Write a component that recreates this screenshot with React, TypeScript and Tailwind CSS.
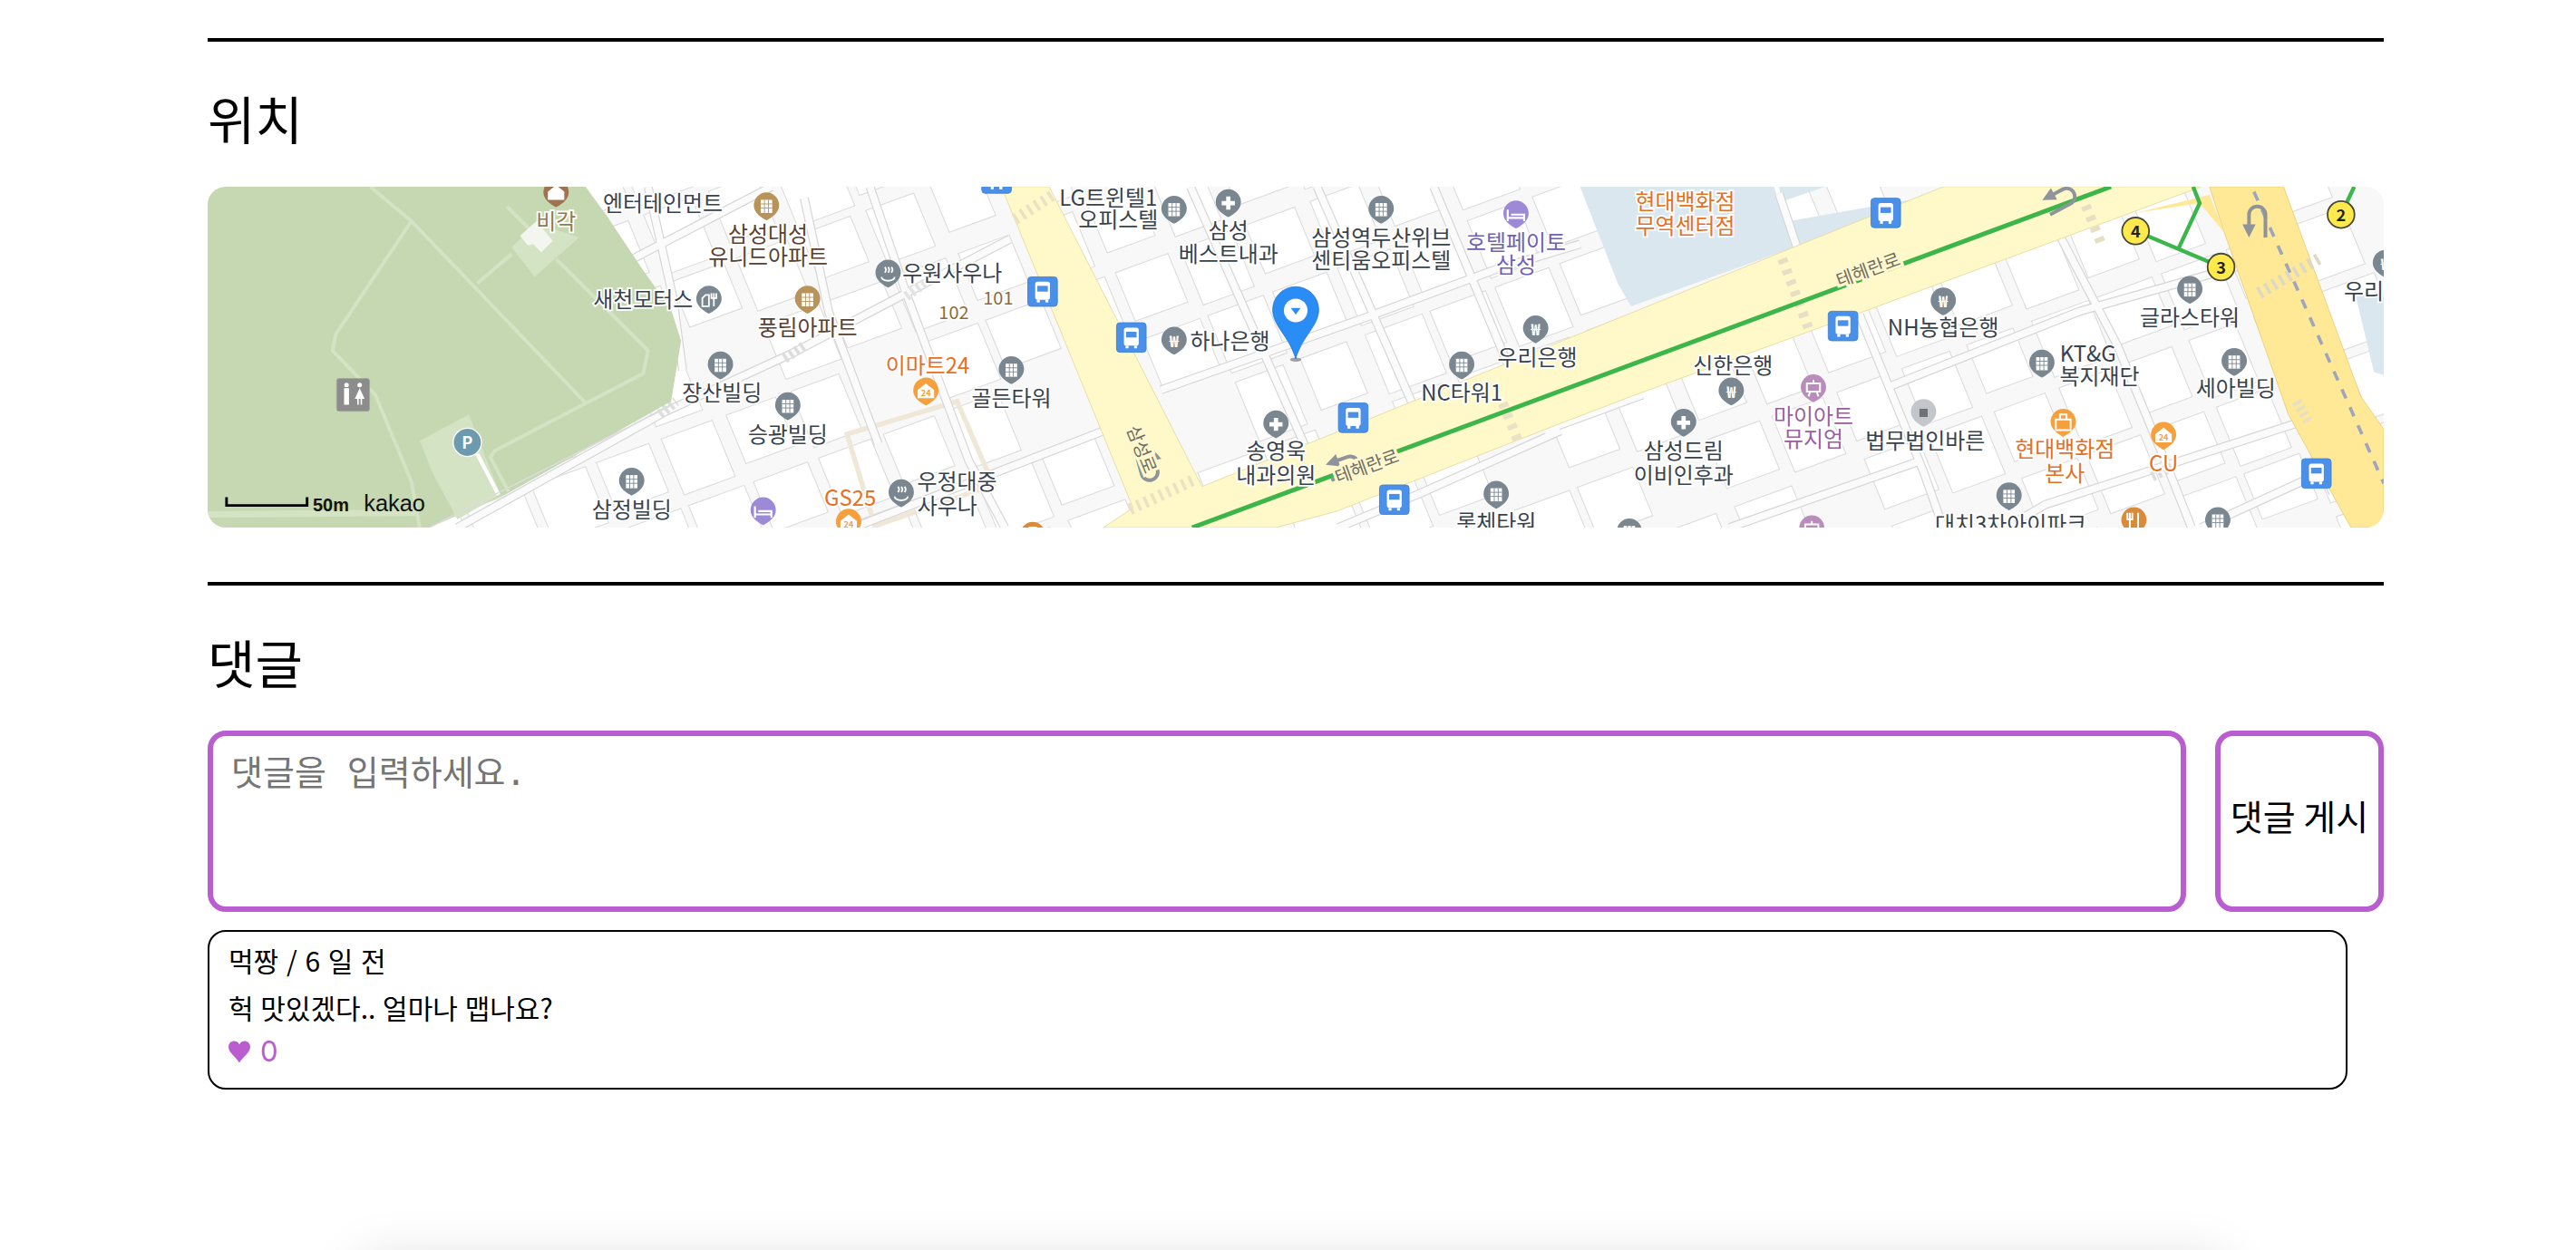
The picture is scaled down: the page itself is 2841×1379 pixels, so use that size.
const KR = '"Noto Sans CJK KR"';

// map is drawn in the coordinates of the 1568px wide overview
const labels: [string, number, number, string?][] = [
  ["엔터테인먼트", 404, 122],
  ["삼성대성", 468, 141, "#5a4030"],
  ["유니드아파트", 468, 155, "#5a4030"],
  ["비각", 339, 133, "#8f7a4a"],
  ["우원사우나", 580, 165],
  ["새천모터스", 392, 181],
  ["풍림아파트", 492, 198, "#5a4030"],
  ["이마트24", 565, 221, "#e5701f"],
  ["장산빌딩", 440, 238],
  ["승광빌딩", 480, 263],
  ["골든타워", 616, 241],
  ["GS25", 518, 302, "#e5701f"],
  ["우정대중", 583, 292],
  ["사우나", 577, 307],
  ["삼정빌딩", 385, 309],
  ["LG트윈텔1", 675, 119],
  ["오피스텔", 681, 132],
  ["삼성", 748, 139],
  ["베스트내과", 748, 153],
  ["삼성역두산위브", 841, 143],
  ["센티움오피스텔", 841, 157],
  ["호텔페이토", 923, 146, "#6e61b5"],
  ["삼성", 923, 160, "#6e61b5"],
  ["하나은행", 749, 206],
  ["우리은행", 936, 216],
  ["NC타워1", 890, 238],
  ["송영욱", 777, 273],
  ["내과의원", 777, 288],
  ["롯체타워", 911, 317],
  ["현대백화점", 1026, 121, "#e5701f"],
  ["무역센터점", 1026, 136, "#e5701f"],
  ["NH농협은행", 1183, 198],
  ["글라스타워", 1333, 192],
  ["우리은행", 1451, 176],
  ["KT&G", 1271, 214],
  ["복지재단", 1278, 228],
  ["세아빌딩", 1361, 235],
  ["신한은행", 1055, 221],
  ["마이아트", 1104, 252, "#9a5fa0"],
  ["뮤지엄", 1104, 266, "#9a5fa0"],
  ["법무법인바른", 1172, 267],
  ["삼성드림", 1025, 273],
  ["이비인후과", 1025, 288],
  ["현대백화점", 1257, 272, "#e5701f"],
  ["본사", 1257, 287, "#e5701f"],
  ["CU", 1317, 281, "#e5701f"],
  ["대치3차아이파크", 1224, 318],
];

const smallLabels: [string, number, number][] = [
  ["101", 608, 180],
  ["102", 581, 189],
];

const GRAY = "#7a8790";
const markers: [string, number, number, string][] = [
  ["home", 339, 117, "#a0724f"],
  ["building", 467, 125, "#b8935a"],
  ["sauna", 541, 166, GRAY],
  ["repair", 432, 182, GRAY],
  ["building", 492, 182, "#b8935a"],
  ["building", 439, 222, GRAY],
  ["building", 480, 247, GRAY],
  ["building", 385, 293, GRAY],
  ["bed", 465, 311, "#9d8ad6"],
  ["sauna", 549, 300, GRAY],
  ["24", 517, 318, "#f5a03c"],
  ["24", 564, 238, "#f5a03c"],
  ["building", 616, 225, GRAY],
  ["building", 715, 127, GRAY],
  ["cross", 748, 123, GRAY],
  ["building", 841, 127, GRAY],
  ["bed", 923, 130, "#9d8ad6"],
  ["won", 715, 207, GRAY],
  ["won", 935, 200, GRAY],
  ["building", 890, 222, GRAY],
  ["cross", 777, 258, GRAY],
  ["building", 911, 301, GRAY],
  ["bag", 629, 326, "#d98a3a"],
  ["building", 992, 324, GRAY],
  ["won", 1183, 183, GRAY],
  ["building", 1333, 176, GRAY],
  ["building", 1243, 221, GRAY],
  ["building", 1360, 220, GRAY],
  ["won", 1054, 238, GRAY],
  ["paint", 1104, 236, "#b98cbc"],
  ["dot", 1171, 251, "#c3c6ca"],
  ["cross", 1025, 257, GRAY],
  ["bag", 1256, 257, "#f5a03c"],
  ["24", 1317, 265, "#f5a03c"],
  ["building", 1223, 302, GRAY],
  ["fork", 1299, 317, "#d98a3a"],
  ["building", 1350, 317, GRAY],
  ["paint", 1103, 322, "#b98cbc"],
  ["won", 1452, 160, GRAY],
];

const busStops = [
  [607, 108],
  [635, 177],
  [689, 205],
  [824, 254],
  [849, 304],
  [1148, 129],
  [1122, 198],
  [1410, 288],
];

// side streets, drawn as a grey line with a pale one on top
const streets = [
  "279,321 406,250 482,215 552,178 615,145",
  "520,321 600,290 672,262",
  "470,113 380,160",
  "707,237 831,193 912,163 962,148",
  "1000,240 940,262",
  "815,321 865,300 950,262",
  "1150,235 1266,189 1375,158",
  "1053,321 1167,281",
  "1180,345 1245,307 1399,257",
  "1340,321 1451,270",
  "395,113 410,180 416,225",
  "530,113 552,178 590,280 612,321",
  "490,120 505,190 535,270",
  "725,113 795,272",
  "802,113 862,250",
  "873,113 905,190 935,262",
  "1083,117 1094,150",
  "1132,191 1171,287 1183,321",
  "1254,143 1289,210 1319,283 1334,321",
  "1390,230 1420,300",
];

const crosswalks: [string, string, number, string][] = [
  ["M618 133L643 117", "#e9e2c4", 7, "2 3"],
  ["M688 310L727 292", "#e9e2c4", 7, "2 3"],
  ["M915 245L925 270", "#e9e2c4", 6, "3 4"],
  ["M1085 157L1102 202", "#e6dfc4", 6, "3 4"],
  ["M1267 118L1280 150", "#e6dfc4", 6, "3 4"],
  ["M1375 178L1413 156", "#dcd8c4", 7, "2 3"],
  ["M1398 244L1405 256", "#e6dfc4", 6, "2 2"],
  ["M402 252L412 244", "#dddddd", 6, "2 2"],
  ["M478 218L490 210", "#dddddd", 6, "2 2"],
  ["M552 180L566 170", "#e3e3e3", 6, "2 2"],
  ["M1310 290L1322 284", "#dddddd", 6, "2 2"],
];

// white building footprints on one slanted lattice, the streets cut through them
const ux = 0.94;
const uy = -0.345;
const vx = 0.38;
const vy = 0.925;
const lattice: string[] = [];
for (let i = -4; i < 40; i++) {
  for (let j = -16; j < 14; j++) {
    if ((i * 3 + j * 5) % 11 === 0) continue;
    const x = 330 + i * 42 * ux + j * 44 * vx;
    const y = 200 + i * 42 * uy + j * 44 * vy;
    const a = 30 + ((i * 7 + j * 3 + 70) % 8);
    const b = 30 + ((i * 5 + j * 11 + 70) % 10);
    lattice.push(
      `${x},${y} ${x + a * ux},${y + a * uy} ${x + a * ux + b * vx},${y + a * uy + b * vy} ${x + b * vx},${y + b * vy}`,
    );
  }
}

const Glyph = ({ kind, x, y, color }: { kind: string; x: number; y: number; color: string }) => {
  switch (kind) {
    case "building":
      return (
        <g>
          <rect x={x - 3.5} y={y - 4} width={7} height={8} fill="#fff" />
          <path d={`M${x - 3.5} ${y - 1.5}H${x + 3.5}M${x - 3.5} ${y + 1}H${x + 3.5}M${x - 1.2} ${y - 4}V${y + 4}M${x + 1.2} ${y - 4}V${y + 4}`} stroke={color} strokeWidth={0.5} />
        </g>
      );
    case "cross":
      return <path d={`M${x - 4} ${y}H${x + 4}M${x} ${y - 4}V${y + 4}`} stroke="#fff" strokeWidth={2.6} />;
    case "won":
      return (
        <text x={x} y={y - 0.5} fontSize={9.5} fontWeight={700} fill="#fff" textAnchor="middle" dominantBaseline="central">
          ₩
        </text>
      );
    case "bed":
      return <path d={`M${x - 5} ${y - 3}V${y + 4}M${x - 5} ${y + 2}H${x + 5}V${y + 4}M${x - 3} ${y}H${x + 5}V${y + 2}`} stroke="#fff" strokeWidth={1.2} fill="none" />;
    case "sauna":
      return <path d={`M${x - 4} ${y + 2}a4 2.4 0 0 0 8 0M${x - 2} ${y - 4}q1.4 1.6 0 3.4M${x} ${y - 4}q1.4 1.6 0 3.4M${x + 2} ${y - 4}q1.4 1.6 0 3.4`} stroke="#fff" strokeWidth={1} fill="none" />;
    case "repair":
      return <path d={`M${x - 4} ${y + 4}V${y - 1}L${x - 2} ${y - 3}H${x}V${y + 4}ZM${x + 3} ${y - 4}V${y + 4}M${x + 1.5} ${y - 4}V${y - 1}H${x + 4.5}V${y - 4}`} stroke="#fff" strokeWidth={1} fill="none" />;
    case "24":
      return (
        <g>
          <path d={`M${x} ${y - 5}L${x + 5} ${y - 1}V${y + 4}H${x - 5}V${y - 1}Z`} fill="#fff" />
          <text x={x} y={y + 1} fontSize={5} fontWeight={700} fill={color} textAnchor="middle" dominantBaseline="central">
            24
          </text>
        </g>
      );
    case "paint":
      return <path d={`M${x - 4} ${y - 3}H${x + 4}V${y + 2}H${x - 4}ZM${x - 2} ${y + 2}L${x - 3} ${y + 5}M${x + 2} ${y + 2}L${x + 3} ${y + 5}M${x} ${y - 5}V${y - 3}`} stroke="#fff" strokeWidth={1.1} fill="none" />;
    case "dot":
      return <rect x={x - 2.5} y={y - 2.5} width={5} height={5} fill="#6f7378" />;
    case "bag":
      return <path d={`M${x - 4.5} ${y - 2}H${x + 4.5}V${y + 4.5}H${x - 4.5}ZM${x - 2} ${y - 2}V${y - 5}H${x + 2}V${y - 2}`} stroke="#fff" strokeWidth={1.1} fill="none" />;
    case "fork":
      return <path d={`M${x - 2.5} ${y - 5}V${y + 5}M${x + 2.5} ${y - 5}V${y + 5}M${x - 4} ${y - 5}V${y - 1}H${x - 1}V${y - 5}`} stroke="#fff" strokeWidth={1.1} fill="none" />;
    default:
      return <path d={`M${x} ${y - 5}L${x + 5} ${y - 1}V${y + 4}H${x - 5}V${y - 1}Z`} fill="#fff" />;
  }
};

const Marker = ({ kind, x, y, color }: { kind: string; x: number; y: number; color: string }) => (
  <g>
    <path
      d={`M${x} ${y + 8.5}C${x - 3} ${y + 7} ${x - 7.7} ${y + 4} ${x - 7.7} ${y - 0.5}A7.7 8 0 0 1 ${x + 7.7} ${y - 0.5}C${x + 7.7} ${y + 4} ${x + 3} ${y + 7} ${x} ${y + 8.5}Z`}
      fill={color}
    />
    <Glyph kind={kind} x={x} y={y} color={color} />
  </g>
);

const BusStop = ({ x, y }: { x: number; y: number }) => (
  <g>
    <rect x={x - 9} y={y - 9} width={18} height={18} rx={2} fill="#4a90e8" stroke="#3f82d6" strokeWidth={0.5} />
    <rect x={x - 4.5} y={y - 6} width={9} height={11} rx={1.5} fill="#fff" />
    <rect x={x - 3.2} y={y - 3.5} width={6.4} height={3.5} fill="#4a90e8" />
    <rect x={x - 3.5} y={y + 5} width={1.8} height={1.6} fill="#fff" />
    <rect x={x + 1.7} y={y + 5} width={1.8} height={1.6} fill="#fff" />
  </g>
);

const StationDot = ({ x, y, n }: { x: number; y: number; n: number }) => (
  <g>
    <circle cx={x} cy={y} r={8.2} fill="#ffe94d" stroke="#4a4a3a" strokeWidth={1} />
    <text x={x} y={y - 0.3} fontSize={10} fontWeight={700} fill="#222" textAnchor="middle" dominantBaseline="central">
      {n}
    </text>
  </g>
);

const RoadName = ({ x, y, rotate, text }: { x: number; y: number; rotate: number; text: string }) => (
  <text
    x={x}
    y={y}
    fontSize={11}
    fill="#6f6f62"
    stroke="#fff8cf"
    strokeWidth={3.5}
    paintOrder="stroke"
    textAnchor="middle"
    dominantBaseline="central"
    transform={`rotate(${rotate} ${x} ${y})`}
  >
    {text}
  </text>
);

const UTurn = ({ x, y, rotate }: { x: number; y: number; rotate: number }) => (
  <g transform={`rotate(${rotate} ${x} ${y})`} fill="none" stroke="#8f949b" strokeWidth={2.2}>
    <path d={`M${x + 6} ${y + 10}V${y - 4}a5 5 0 0 0 -10 0V${y + 4}`} />
    <path d={`M${x - 8} ${y + 2}L${x - 4} ${y + 10}L${x} ${y + 2}Z`} fill="#8f949b" stroke="none" />
  </g>
);

const KakaoMap = () => (
  <div className="h-[376px] w-full overflow-hidden rounded-[20px]">
    <svg viewBox="127 113 1324 208" preserveAspectRatio="none" className="block h-full w-full" fontFamily={KR}>
      <rect x={127} y={113} width={1324} height={208} fill="#f8f8f8" />
      <g fill="#ffffff" stroke="#dcdcdc" strokeWidth={0.6}>
        {lattice.map((points, i) => (
          <polygon key={i} points={points} />
        ))}
      </g>
      <polygon points="516,264 583,244 605,295 533,320" fill="none" stroke="#efe8d8" strokeWidth={3} />

      <polygon points="962,113 1080,113 1092,150 993,186 985,172" fill="#dbe7ef" />
      <polygon points="1089,134 1180,118 1153,131 1097,149" fill="#dbe7ef" />
      <polygon points="1083,113 1111,113 1085,122" fill="#dbe7ef" />
      <polygon points="1434,180 1451,176 1451,228 1445,226" fill="#dbe7ef" />

      <g fill="none" strokeLinejoin="round">
        {streets.map((points) => (
          <polyline key={points} points={points} stroke="#d6d6d6" strokeWidth={5.5} />
        ))}
        {streets.map((points) => (
          <polyline key={points} points={points} stroke="#fbfbfb" strokeWidth={4.2} />
        ))}
      </g>

      <polygon points="610,113 639,113 732,296 1183,113 1340,113 1313,123 1135,189 993,241 946,259 814,311 777,321 672,321 690,309" fill="#fff8c9" stroke="#e6dba0" strokeWidth={0.5} />
      <polygon points="1345,113 1390,113 1437,241 1451,261 1451,321 1431,321 1393,252 1354,141" fill="#ffe896" stroke="#e9cf7a" strokeWidth={0.5} />
      <path d="M1300 129L1339 123L1354 141L1345 118Z" fill="#ffe896" />
      <path d="M1372 116L1451 294" stroke="#9ea6bd" strokeWidth={2} strokeDasharray="6 6" />
      {crosswalks.map(([d, color, width, dash]) => (
        <path key={d} d={d} stroke={color} strokeWidth={width} strokeDasharray={dash} fill="none" />
      ))}

      <path d="M726 321L1285 113" stroke="#3cb54a" strokeWidth={2.8} />
      <path d="M1300 140L1352 162M1326 151L1339 123L1335 113M1425 130L1433 113" stroke="#3cb54a" strokeWidth={2.4} fill="none" />

      <polygon points="127,113 357,113 370,131 392,164 409,188 415,207 409,244 308,301 262,321 127,321" fill="#c5d8b1" />
      <g fill="none" stroke="#d3e3c4" strokeWidth={2.2} strokeLinejoin="round">
        <path d="M226 113L251 134L357 245" />
        <path d="M251 134L205 203L203 213L229 240L251 293L256 321" />
        <path d="M291 172L312 154" />
        <path d="M339 157L395 213L392 227L302 274L299 278L310 299" />
        <path d="M309 125L326 142" />
        <path d="M127 313L254 312" strokeWidth={4} />
      </g>
      <polygon points="312,150 327,135 353,144 326,168" fill="#d3e3c4" />
      <polygon points="317,143 327,134 337,146 330,153 325,148 322,149" fill="#f3f6ef" />
      <polygon points="256,268 286,252 305,301 279,316 264,288" fill="#d3e3c4" />
      <path d="M291 276L304 301" stroke="#fff" strokeWidth={2.4} />
      <path d="M262 321L408 247" stroke="#dcdcdc" strokeWidth={0.8} />

      <rect x={205.5} y={230} width={20} height={20} rx={1.5} fill="#8c8c8c" stroke="#a5a5a5" strokeWidth={0.5} />
      <circle cx={211.5} cy={234} r={1.4} fill="#fff" />
      <circle cx={219.5} cy={234} r={1.4} fill="#fff" />
      <path d="M210 236H213V246H210ZM219.5 236L222.5 242.5H216.5Z" fill="#fff" />
      <path d="M218.5 242V246M220.5 242V246" stroke="#fff" strokeWidth={0.9} />
      <circle cx={285} cy={269} r={8.6} fill="#6e9ab0" stroke="#fff" strokeWidth={0.7} />
      <text x={285} y={268.5} fontSize={10} fontWeight={700} fill="#fff" textAnchor="middle" dominantBaseline="central">
        P
      </text>

      <UTurn x={1373} y={134} rotate={0} />
      <UTurn x={1254} y={120} rotate={62} />
      <UTurn x={700} y={283} rotate={165} />
      <UTurn x={818} y={283} rotate={70} />
      <RoadName x={1137} y={163} rotate={-20} text="테헤란로" />
      <RoadName x={832} y={283} rotate={-20} text="테헤란로" />
      <RoadName x={696} y={273} rotate={68} text="삼성로" />

      {busStops.map(([x, y]) => (
        <BusStop key={`${x}-${y}`} x={x} y={y} />
      ))}
      {markers.map(([kind, x, y, color]) => (
        <Marker key={`${x}-${y}`} kind={kind} x={x} y={y} color={color} />
      ))}
      <StationDot x={1300} y={140} n={4} />
      <StationDot x={1352} y={162} n={3} />
      <StationDot x={1425} y={130} n={2} />

      <g fontSize={13.2} textAnchor="middle" dominantBaseline="central" stroke="#ffffff" strokeWidth={2} paintOrder="stroke">
        {labels.map(([text, x, y, color]) => (
          <text key={`${text}-${x}-${y}`} x={x} y={y} fill={color ?? "#38424c"}>
            {text}
          </text>
        ))}
        {smallLabels.map(([text, x, y]) => (
          <text key={text} x={x} y={y} fontSize={11} fill="#8a6d3b">
            {text}
          </text>
        ))}
      </g>

      <ellipse cx={789} cy={218.5} rx={3.5} ry={1.2} fill="#777" opacity={0.7} />
      <path d="M789 218C785 204 775 198 775 188A14 14 0 0 1 803 188C803 198 793 204 789 218Z" fill="#2a8cf5" stroke="#1c6fd0" strokeWidth={0.4} />
      <ellipse cx={789} cy={188.5} rx={7.2} ry={7.2} fill="#fff" />
      <path d="M786 187H792L789 191Z" fill="#2a8cf5" />

      <path d="M138.5 302.5V307.5H187.5V302.5" fill="none" stroke="#000" strokeWidth={1.6} />
      <text x={191} y={307} fontSize={11} fontWeight={700} fill="#111" dominantBaseline="central" fontFamily="Liberation Sans, sans-serif">
        50m
      </text>
      <text x={222} y={306} fontSize={14} fill="#111" dominantBaseline="central" fontFamily="Liberation Sans, sans-serif">
        kakao
      </text>
    </svg>
  </div>
);

const App = () => {
  return (
    <div className="h-screen overflow-hidden bg-white pl-[229px] pr-[212px] pt-[42px] font-['Noto_Sans_CJK_KR',sans-serif] text-black">
      <section className="border-t-4 border-black">
        <h2 className="mb-[37px] mt-[43px] text-[57px] font-normal leading-[80px]">위치</h2>
        <KakaoMap />
      </section>

      <section className="mt-[60px] border-t-4 border-black">
        <h2 className="mb-[37px] mt-[43px] text-[57px] font-normal leading-[80px]">댓글</h2>
        <div className="flex h-[200px] gap-[32px]">
          <textarea
            placeholder="댓글을 입력하세요."
            className="h-full flex-1 resize-none rounded-[20px] border-[6px] border-[#b95dd0] bg-white px-5 py-[16px] font-['DejaVu_Sans_Mono','Noto_Sans_CJK_KR',monospace] text-[38px] leading-[50px] outline-none placeholder:text-[#757575]"
          />
          <button className="h-full w-[186px] rounded-[20px] border-[6px] border-[#b95dd0] bg-white pb-[14px] text-[39px]">
            댓글 게시
          </button>
        </div>
        <div className="mt-[20px] h-[176px] w-[2360px] rounded-[20px] border-2 border-black px-[21px] pt-[9px]">
          <p className="text-[30px] leading-[44px] [word-spacing:2px]">먹짱 / 6 일 전</p>
          <p className="mt-[8px] text-[30px] leading-[44px] [word-spacing:1px]">헉 맛있겠다.. 얼마나 맵나요?</p>
          <p className="mt-[5px] flex items-center gap-[11px] font-['Inter',sans-serif] text-[31px] leading-[44px] text-[#b95dd0]">
            <svg viewBox="0 0 24 24" className="h-[25px] w-[24px]" fill="#b95dd0">
              <path d="M12 24C9 18 0 13 0 6.500C0 2.500 3 0 6 0C9 0 11 1.500 12 4C13 1.500 15 0 18 0C21 0 24 2.500 24 6.500C24 13 15 18 12 24Z" />
            </svg>
            <span>0</span>
          </p>
        </div>
      </section>

      <div className="ml-[171px] mt-[190px] h-20 w-[2050px] shadow-[0_0_60px_rgba(0,0,0,0.15)]" />
    </div>
  );
};

export default App;
